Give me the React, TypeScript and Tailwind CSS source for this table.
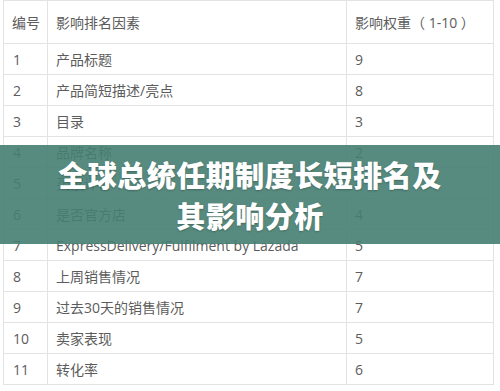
import React from 'react';

const rows: [string, string, string][] = [
    ['1', '产品标题', '9'],
    ['2', '产品简短描述/亮点', '8'],
    ['3', '目录', '3'],
    ['4', '品牌名称', '2'],
    ['5', '买家评价', '4'],
    ['6', '是否官方店', '4'],
    ['7', 'ExpressDelivery/Fulfilment by Lazada', '5'],
    ['8', '上周销售情况', '7'],
    ['9', '过去30天的销售情况', '7'],
    ['10', '卖家表现', '5'],
    ['11', '转化率', '6'],
];

export default function App() {
    return (
        <div
            className="relative w-[500px] h-[391px] overflow-hidden bg-white"
            style={{ fontFamily: '"Open Sans", "Noto Sans CJK SC", sans-serif' }}
        >
            <table className="ml-[3px] w-[490px] border-collapse text-[14px] text-[#5c5c5c] table-fixed whitespace-nowrap">
                <colgroup>
                    <col className="w-[44px]" />
                    <col className="w-[299px]" />
                    <col className="w-[147px]" />
                </colgroup>
                <thead>
                    <tr className="h-[43px]">
                        <th className="border border-[#e3e3e3] pl-[8px] pr-0 text-left font-normal">编号</th>
                        <th className="border border-[#e3e3e3] px-[8px] text-left font-normal">影响排名因素</th>
                        <th className="border border-[#e3e3e3] px-[8px] text-left font-normal [text-spacing-trim:space-all]">
                            影响权重（ 1-10 ）
                        </th>
                    </tr>
                </thead>
                <tbody>
                    {rows.map(([n, name, w]) => (
                        <tr key={n} className="h-[31px]">
                            <td className="border border-[#e3e3e3] pl-[9px] pr-0">{n}</td>
                            <td className="border border-[#e3e3e3] px-[8px]">{name}</td>
                            <td className="border border-[#e3e3e3] px-[8px]">{w}</td>
                        </tr>
                    ))}
                </tbody>
            </table>

            {/* Title banner */}
            <div className="absolute left-0 right-0 top-[145px] h-[99px] bg-[rgba(70,126,113,0.9)] flex flex-col items-center justify-center">
                <div
                    className="text-white text-[29px] leading-[41px] font-black tracking-[0.5px] text-center [text-shadow:0_1px_2px_rgba(0,0,0,0.25)]"
                    style={{ fontFamily: '"Noto Sans CJK SC", sans-serif' }}
                >
                    <div>全球总统任期制度长短排名及</div>
                    <div>其影响分析</div>
                </div>
            </div>
        </div>
    );
}
